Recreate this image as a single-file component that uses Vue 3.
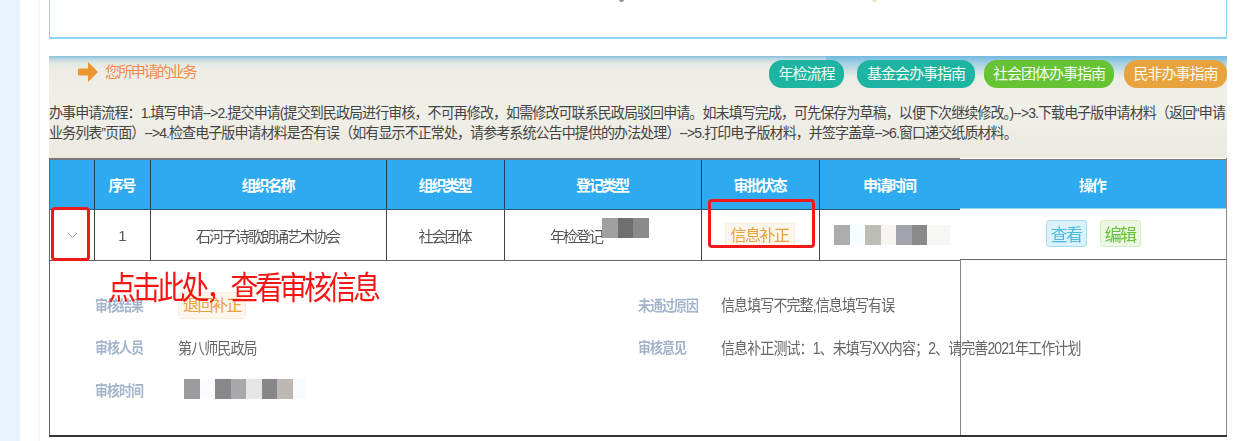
<script setup>
const guides = [
  { text: '年检流程', tone: 'teal' },
  { text: '基金会办事指南', tone: 'teal' },
  { text: '社会团体办事指南', tone: 'green' },
  { text: '民非办事指南', tone: 'orange' }
]
const heads = ['', '序号', '组织名称', '组织类型', '登记类型', '审批状态', '申请时间']
</script>

<template>
  <div class="page">
    <div class="rail"></div>
    <main class="main">
      <section class="topbox">
        <i class="speck gray"></i>
        <i class="speck gold"></i>
      </section>

      <section class="banner">
        <div class="head">
          <svg class="arrow" width="20" height="20" viewBox="0 0 20 20">
            <path d="M0 6.500H10V0L20 10L10 20V13.500H0Z" fill="#ef9530" />
          </svg>
          <span class="title">您所申请的业务</span>
          <div class="guides">
            <a v-for="g in guides" :key="g.text" class="guide" :class="g.tone">{{ g.text }}</a>
          </div>
        </div>
        <p class="process">办事申请流程：1.填写申请--&gt;2.提交申请(提交到民政局进行审核，不可再修改，如需修改可联系民政局驳回申请。如未填写完成，可先保存为草稿，以便下次继续修改。)--&gt;3.下载电子版申请材料（返回“申请<br />业务列表”页面）--&gt;4.检查电子版申请材料是否有误（如有显示不正常处，请参考系统公告中提供的办法处理）--&gt;5.打印电子版材料，并签字盖章--&gt;6.窗口递交纸质材料。</p>
      </section>

      <section class="table">
        <div class="left">
          <div class="row thead">
            <div v-for="(h, i) in heads" :key="i" class="cell">{{ h }}</div>
          </div>
          <div class="row tbody">
            <div class="cell chevron">
              <svg width="11" height="7" viewBox="0 0 11 7"><path d="M1 1L5.500 5.500L10 1" fill="none" stroke="#a8a8a8" stroke-width="1" /></svg>
            </div>
            <div class="cell">1</div>
            <div class="cell">石河子诗歌朗诵艺术协会</div>
            <div class="cell">社会团体</div>
            <div class="cell reg">年检登记<i class="mosaic m-reg"></i></div>
            <div class="cell"><span class="tag">信息补正</span></div>
            <div class="cell"><i class="mosaic m-apply"></i></div>
          </div>
          <div class="detail">
            <div class="pair">
              <span class="label">审核结果</span>
              <span class="tag small">退回补正</span>
            </div>
            <div class="pair">
              <span class="label">未通过原因</span>
              <span class="value">信息填写不完整,信息填写有误</span>
            </div>
            <div class="pair">
              <span class="label">审核人员</span>
              <span class="value">第八师民政局</span>
            </div>
            <div class="pair">
              <span class="label">审核意见</span>
              <span class="value">信息补正测试：1、未填写XX内容；2、请完善2021年工作计划</span>
            </div>
            <div class="pair">
              <span class="label">审核时间</span>
              <i class="mosaic m-audit"></i>
            </div>
          </div>
          <div class="note">点击此处，查看审核信息</div>
          <div class="mark mark-expand"></div>
          <div class="mark mark-status"></div>
        </div>
        <div class="ops">
          <div class="ops-head">操作</div>
          <div class="ops-row">
            <button class="btn view">查看</button>
            <button class="btn edit">编辑</button>
          </div>
          <div class="ops-rest"></div>
        </div>
      </section>
    </main>
  </div>
</template>

<style>
html, body { margin: 0; background: #fff; }
</style>

<style scoped>
.page {
  width: 1237px;
  height: 441px;
  display: flex;
  overflow: hidden;
  background: #fff;
  font-family: "Liberation Sans", "Noto Sans CJK SC", sans-serif;
  color: #555;
}
.rail { width: 20px; flex: none; background: #e8f3fd; }
.main {
  width: 1178px;
  flex: none;
  margin-left: 18px;
  border-left: 2px solid #f4f7fd;
  padding-left: 9px;
  filter: blur(0.45px);
}
.topbox {
  position: relative;
  box-sizing: border-box;
  height: 39px;
  border: 1px solid #8fd0f5;
  border-top: 0;
  border-bottom-width: 2px;
}
.speck { position: absolute; top: 0; width: 5px; height: 2px; border-radius: 0 0 3px 3px; }
.speck.gray { left: 569px; background: #999; }
.speck.gold { left: 822px; background: #f0e2b8; }

.banner {
  box-sizing: border-box;
  height: 102px;
  margin-top: 17px;
  background:
    linear-gradient(180deg, rgba(108, 185, 225, .75) 0, rgba(108, 185, 225, .5) 8px, rgba(108, 185, 225, 0) 22px) right top / 34% 22px no-repeat,
    linear-gradient(180deg, #86bfd9 0, #bcd9e4 3px, #e2e8e3 7px, #eeede5 14px, #f0efe8 60px, #ebe9e0 100%);
}
.head { display: flex; align-items: flex-start; padding: 4px 0 0 29px; }
.arrow { margin-top: 2px; flex: none; }
.title {
  margin: 2px 0 0 7px;
  font-size: 15px;
  line-height: 20px;
  letter-spacing: -2.100px;
  color: #f58a4b;
}
.guides { margin-left: auto; display: flex; gap: 9px; }
.guide {
  box-sizing: border-box;
  height: 28px;
  line-height: 28px;
  text-align: center;
  border-radius: 13px;
  color: #f4fbf4;
  font-size: 15px;
  letter-spacing: -1px;
  white-space: nowrap;
}
.guide:nth-child(1) { margin-right: 4px; width: 75px; }
.guide:nth-child(2) { width: 118px; }
.guide:nth-child(3) { width: 130px; margin-right: 1px; }
.guide:nth-child(4) { width: 103px; }
.teal { background: #1db5a2; }
.green { background: #66c434; }
.orange { background: #e8a33e; }
.process {
  margin: 15px 0 0;
  font-size: 14px;
  line-height: 18px;
  letter-spacing: -.91px;
  color: #444;
  white-space: nowrap;
  transform: scaleY(1.08);
  transform-origin: left top;
}

.table { display: flex; height: 279px; border-bottom: 2px solid #333; box-sizing: border-box; position: relative; }
.left { position: relative; width: 911px; flex: none; display: flex; flex-direction: column; border-left: 1px solid #666; box-sizing: border-box; }
.row { display: grid; grid-template-columns: 45px 56px 236px 118px 197px 118px 140px; }
.cell {
  display: flex;
  align-items: center;
  justify-content: center;
  box-sizing: border-box;
  border-right: 1px solid #444;
  padding-right: 2px;
  font-size: 15px;
  letter-spacing: -2px;
  white-space: nowrap;
}
.cell:last-child { border-right: 0; }
.chevron { padding-right: 0; }
.thead { height: 52px; border-top: 2px solid #777; border-bottom: 1px solid #2a5a7a; box-sizing: border-box; background: #2daaf0; color: #fff; font-weight: 700; }
.thead .cell { border-right-color: #1c3f58; padding-top: 0; }
.tbody { height: 51px; border-bottom: 1px solid #666; box-sizing: border-box; }
.reg { padding-right: 54px; position: relative; }

.tag {
  box-sizing: border-box;
  width: 70px;
  height: 25px;
  line-height: 24px;
  text-align: center;
  background: #fdf6ec;
  border: 1px solid #faecd8;
  color: #e6a23c;
  font-size: 16px;
  letter-spacing: -1.500px;
}
.tag.small { width: 68px; height: 27px; line-height: 25px; border-radius: 3px; margin-top: 2px; }

.detail {
  flex: 1;
  display: grid;
  grid-template-columns: 543px 1fr;
  grid-auto-rows: 42.500px;
  padding: 22px 0 0 45px;
  box-sizing: border-box;
}
.pair { display: flex; align-items: center; position: relative; white-space: nowrap; }
.label { width: 83px; flex: none; font-size: 13px; letter-spacing: -1px; font-weight: 700; color: #a3b4cb; transform: scaleY(1.14); transform-origin: left center; }
.value { font-size: 14px; letter-spacing: -.9px; color: #666; transform: scaleY(1.12); }

.mosaic { display: block; height: 20px; }
.m-reg {
  position: absolute;
  left: 97px;
  top: 8px;
  width: 47px;
  background: linear-gradient(90deg, #a0a0a0 0 16px, #6f6f72 16px 31px, #8a8a8a 31px);
}
.m-apply {
  width: 116px;
  margin-left: 5px;
  background: linear-gradient(90deg, #adadb0 0 16px, #f5fdff 16px 31px, #bdbdb5 31px 47px, #f7f5f2 47px 62px, #a3a3ad 62px 78px, #8a8a8a 78px 93px, #f6f6f4 93px 116px);
}
.m-audit {
  width: 121px;
  margin-left: 6px;
  background: linear-gradient(90deg, #9b9a9d 0 16px, #fbfcfd 16px 31px, #8a878c 31px 47px, #a9a9ab 47px 62px, #e6e6e6 62px 78px, #888688 78px 93px, #bdb8b3 93px 109px, #f8fbfd 109px);
}

.note {
  position: absolute;
  left: 58px;
  top: 112px;
  font-size: 28px;
  line-height: 34px;
  letter-spacing: -3.500px;
  color: #f91414;
  white-space: nowrap;
  transform: scaleY(1.12);
  transform-origin: left top;
}
.mark { position: absolute; box-sizing: border-box; border: 3px solid #f01818; border-radius: 4px; }
.mark-expand { left: 1px; top: 49px; width: 39px; height: 54px; }
.mark-status { left: 658px; top: 41px; width: 107px; height: 49px; }

.ops { width: 267px; flex: none; display: flex; flex-direction: column; box-sizing: border-box; border-right: 1px solid #888; }
.ops-head {
  height: 50px;
  margin-top: 1px;
  background: #2daaf0;
  border-top: 1px solid #777;
  border-bottom: 1px solid #8fd0f5;
  box-sizing: border-box;
  display: flex;
  align-items: center;
  justify-content: center;
  padding-right: 2px;
  color: #fff;
  font-weight: 700;
  font-size: 15px;
  letter-spacing: -2px;
}
.ops-row {
  height: 51px;
  box-sizing: border-box;
  border-bottom: 1px solid #666;
  display: flex;
  justify-content: center;
  align-items: flex-start;
  gap: 13px;
  padding-top: 11px;
}
.ops-rest { flex: 1; border-left: 1px solid #888; }
.btn {
  width: 41px;
  height: 27px;
  padding: 0;
  border-radius: 3px;
  font: 17px "Liberation Sans", "Noto Sans CJK SC", sans-serif;
  letter-spacing: -1.800px;
}
.view { background: #dcf2fb; border: 1px solid #a6dcf5; color: #4cb8dc; }
.edit { background: #ebf7e3; border: 1px solid #d5eec4; color: #67c23a; }
</style>
